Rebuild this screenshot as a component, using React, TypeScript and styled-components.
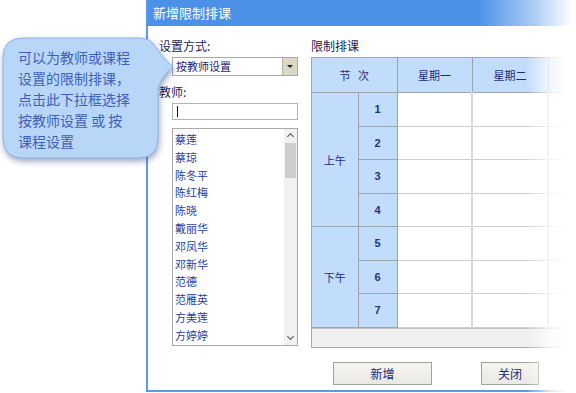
import React from 'react';
import styled, { createGlobalStyle } from 'styled-components';

const GlobalStyle = createGlobalStyle`
  html, body {
    margin: 0;
    padding: 0;
    background: #ffffff;
  }
  body {
    font-family: "Noto Sans CJK SC", "Noto Sans", sans-serif;
  }
`;

const Stage = styled.div`
  position: relative;
  width: 576px;
  height: 393px;
  overflow: hidden;
  background: #ffffff;
`;

const Dialog = styled.div`
  margin-left: 146px;
  width: 460px;
  height: 392px;
  box-sizing: border-box;
  border-left: 2px solid #5b9ae6;
  border-bottom: 2px solid #5b9ae6;
  display: flex;
  flex-direction: column;
  background: #ffffff;
`;

const TitleBar = styled.div`
  height: 26px;
  line-height: 25px;
  padding-left: 5px;
  background: linear-gradient(to right, #4c91e8 0px, #4c91e8 330px, #a9ccf4 385px, #ffffff 425px);
  color: #ffffff;
  font-size: 13px;
  flex-shrink: 0;
`;

const Body = styled.div`
  display: flex;
  gap: 13px;
  padding: 12px 0 0 11px;
`;

const LeftPane = styled.div`
  width: 139px;
  display: flex;
  flex-direction: column;
  flex-shrink: 0;
`;

const RightPane = styled.div`
  display: flex;
  flex-direction: column;
  flex: 1;
`;

const Label = styled.div<{ $gap?: number }>`
  font-size: 12px;
  line-height: 16px;
  color: #1c1c52;
  margin-top: ${(p) => p.$gap ?? 0}px;
`;

const SelectBox = styled.div`
  margin: 3px 0 0 13px;
  height: 19px;
  box-sizing: border-box;
  border: 1px solid #a9a9a9;
  display: flex;
  align-items: stretch;
`;

const SelectText = styled.div`
  flex: 1;
  font-size: 11px;
  line-height: 17px;
  padding-left: 3px;
  color: #1c2470;
`;

const SelectButton = styled.div`
  width: 14px;
  border-left: 1px solid #b8b4a4;
  background: #dcd8c6;
  display: flex;
  align-items: center;
  justify-content: center;
  &::after {
    content: '';
    border-left: 3px solid transparent;
    border-right: 3px solid transparent;
    border-top: 3px solid #202020;
  }
`;

const TextInput = styled.div`
  margin: 3px 0 0 13px;
  height: 17px;
  box-sizing: border-box;
  border: 1px solid #b3b3b3;
  display: flex;
  align-items: center;
  padding-left: 4px;
`;

const Caret = styled.span`
  width: 1px;
  height: 11px;
  background: #111111;
`;

const ListBox = styled.div`
  margin: 8px 0 0 13px;
  height: 218px;
  box-sizing: border-box;
  border: 1px solid #a9a9a9;
  display: flex;
  overflow: hidden;
`;

const ListItems = styled.div`
  flex: 1;
  padding: 2px 0 0 2px;
`;

const ListItem = styled.div`
  height: 17.8px;
  line-height: 17.8px;
  font-size: 11px;
  color: #2b3c9c;
`;

const ScrollBar = styled.div`
  width: 13px;
  background: #f1f1f1;
  display: flex;
  flex-direction: column;
  align-items: center;
`;

const ScrollArrow = styled.div<{ $down?: boolean }>`
  height: 13px;
  width: 13px;
  display: flex;
  align-items: center;
  justify-content: center;
  &::after {
    content: '';
    width: 4px;
    height: 4px;
    border-left: 1.5px solid #555;
    border-top: 1.5px solid #555;
    transform: ${(p) => (p.$down ? 'translateY(-2px) rotate(225deg)' : 'translateY(1px) rotate(45deg)')};
  }
`;

const ScrollThumb = styled.div`
  width: 11px;
  height: 35px;
  background: #cdcdcd;
  margin-top: 1px;
`;

const ScrollSpacer = styled.div`
  flex: 1;
`;

const TableFrame = styled.div`
  margin-top: 3px;
  width: 388px;
  border: 1px solid #a7a7a7;
  border-right: none;
  background: #ffffff;
`;

const Grid = styled.table`
  border-collapse: collapse;
  table-layout: fixed;
  width: 388px;
`;

const HeadCell = styled.th`
  height: 34px;
  padding: 0;
  background: #c2dcfb;
  border-right: 1px solid #9aa3b0;
  border-bottom: 1px solid #9aa3b0;
  font-size: 11px;
  font-weight: normal;
  color: #1d2a7c;
  text-align: center;
  white-space: pre;
`;

const SideCell = styled.td`
  padding: 0;
  background: #c2dcfb;
  border-right: 1px solid #9aa3b0;
  border-bottom: 1px solid #9aa3b0;
  font-size: 11px;
  color: #1d2a7c;
  text-align: center;
  height: 32.5px;
`;

const NumCell = styled(SideCell)`
  font-weight: bold;
  font-family: "Liberation Sans", sans-serif;
  color: #26337f;
`;

const SlotCell = styled.td`
  padding: 0;
  border-right: 2px solid #d9d9d9;
  border-bottom: 1px solid #cfcfcf;
`;

const TableFoot = styled.div`
  height: 18px;
  background: #efefef;
  border-top: 1px solid #c4c4c4;
`;

const Footer = styled.div`
  display: flex;
  padding: 14px 0 0 185px;
  gap: 49px;
`;

const Button = styled.div<{ $w: number }>`
  width: ${(p) => p.$w}px;
  height: 23px;
  box-sizing: border-box;
  border: 1px solid #a2a2a2;
  background: linear-gradient(#f4f3ef, #ebe9e2);
  display: flex;
  align-items: center;
  justify-content: center;
  font-size: 12px;
  color: #1d2a7c;
`;

const Fade = styled.div`
  position: absolute;
  top: 26px;
  right: 0;
  width: 50px;
  height: 367px;
  background: linear-gradient(to right, rgba(255, 255, 255, 0) 0%, rgba(255, 255, 255, 0.8) 50%, #ffffff 85%);
  pointer-events: none;
`;

const Callout = styled.div`
  position: absolute;
  left: 0;
  top: 0;
  width: 180px;
  height: 170px;
`;

const CalloutShape = styled.svg`
  position: absolute;
  left: 0;
  top: 0;
  filter: drop-shadow(1px 3px 3px rgba(40, 60, 110, 0.45));
`;

const CalloutText = styled.div`
  position: absolute;
  left: 18px;
  top: 47px;
  font-size: 14px;
  line-height: 21px;
  color: #4060b8;
  white-space: pre;
`;

const teachers = ['蔡莲', '蔡琼', '陈冬平', '陈红梅', '陈晓', '戴丽华', '邓凤华', '邓新华', '范德', '范雁英', '方美莲', '方婷婷'];
// only the first two day headers are readable; the rest fade out past the edge
const days = ['星期一', '星期二', '', ''];
const periods = [1, 2, 3, 4, 5, 6, 7];

export default function App() {
  return (
    <Stage>
      <GlobalStyle />
      <Dialog>
        <TitleBar>新增限制排课</TitleBar>
        <Body>
          <LeftPane>
            <Label>设置方式:</Label>
            <SelectBox>
              <SelectText>按教师设置</SelectText>
              <SelectButton />
            </SelectBox>
            <Label $gap={8}>教师:</Label>
            <TextInput>
              <Caret />
            </TextInput>
            <ListBox>
              <ListItems>
                {teachers.map((t) => (
                  <ListItem key={t}>{t}</ListItem>
                ))}
              </ListItems>
              <ScrollBar>
                <ScrollArrow />
                <ScrollThumb />
                <ScrollSpacer />
                <ScrollArrow $down />
              </ScrollBar>
            </ListBox>
          </LeftPane>
          <RightPane>
            <Label>限制排课</Label>
            <TableFrame>
              <Grid>
                <colgroup>
                  <col style={{ width: 46 }} />
                  <col style={{ width: 39 }} />
                  <col style={{ width: 75 }} />
                  <col style={{ width: 76 }} />
                  <col style={{ width: 76 }} />
                  <col style={{ width: 76 }} />
                </colgroup>
                <thead>
                  <tr>
                    <HeadCell colSpan={2}>{'节   次'}</HeadCell>
                    {days.map((d, i) => (
                      <HeadCell key={i}>{d}</HeadCell>
                    ))}
                  </tr>
                </thead>
                <tbody>
                  {periods.map((p) => (
                    <tr key={p}>
                      {p === 1 && <SideCell rowSpan={4}>上午</SideCell>}
                      {p === 5 && <SideCell rowSpan={3}>下午</SideCell>}
                      <NumCell>{p}</NumCell>
                      {days.map((_, i) => (
                        <SlotCell key={i} />
                      ))}
                    </tr>
                  ))}
                </tbody>
              </Grid>
              <TableFoot />
            </TableFrame>
          </RightPane>
        </Body>
        <Footer>
          <Button $w={99}>新增</Button>
          <Button $w={58}>关闭</Button>
        </Footer>
      </Dialog>
      <Fade />
      <Callout>
        <CalloutShape width="180" height="170" viewBox="0 0 180 170">
          <path
            d="M 23 38 H 140 Q 150 38 155 46 Q 162 58 173 67 Q 163 74 158 88 V 138 Q 158 158 138 158 H 23 Q 3 158 3 138 V 58 Q 3 38 23 38 Z"
            fill="#b8d7f8"
            stroke="#8fb3e4"
            strokeWidth="1"
          />
        </CalloutShape>
        <CalloutText>{'可以为教师或课程\n设置的限制排课，\n点击此下拉框选择\n按教师设置 或 按\n课程设置'}</CalloutText>
      </Callout>
    </Stage>
  );
}
